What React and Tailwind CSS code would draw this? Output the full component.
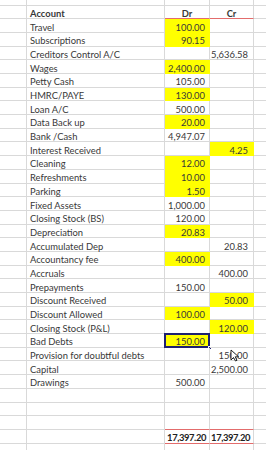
import React from 'react';

const rows = [
  ['Travel', '100.00', '', 'dr'],
  ['Subscriptions', '90.15', '', 'dr'],
  ['Creditors Control A/C', '', '5,636.58', ''],
  ['Wages', '2,400.00', '', 'dr'],
  ['Petty Cash', '105.00', '', ''],
  ['HMRC/PAYE', '130.00', '', 'dr'],
  ['Loan A/C', '500.00', '', ''],
  ['Data Back up', '20.00', '', 'dr'],
  ['Bank /Cash', '4,947.07', '', ''],
  ['Interest Received', '', '4.25', 'cr'],
  ['Cleaning', '12.00', '', 'dr'],
  ['Refreshments', '10.00', '', 'dr'],
  ['Parking', '1.50', '', 'dr'],
  ['Fixed Assets', '1,000.00', '', ''],
  ['Closing Stock (BS)', '120.00', '', ''],
  ['Depreciation', '20.83', '', 'dr'],
  ['Accumulated Dep', '', '20.83', ''],
  ['Accountancy fee', '400.00', '', 'dr'],
  ['Accruals', '', '400.00', ''],
  ['Prepayments', '150.00', '', ''],
  ['Discount Received', '', '50.00', 'cr'],
  ['Discount Allowed', '100.00', '', 'dr'],
  ['Closing Stock (P&L)', '', '120.00', 'cr'],
  ['Bad Debts', '150.00', '', 'sel'],
  ['Provision for doubtful debts', '', '150.00', 'cursor'],
  ['Capital', '', '2,500.00', ''],
  ['Drawings', '500.00', '', ''],
  ['', '', '', ''],
  ['', '', '', ''],
  ['', '', '', 'last'],
];

const Cursor = () => (
  <svg className="absolute left-[20px] top-[1px]" width="10" height="13" viewBox="0 0 10 13">
    <path d="M1 1 L1 11 L3.5 8.5 L5.5 12 L7 11.3 L5.2 7.8 L8.6 7.8 Z" fill="#fff" stroke="#111" strokeWidth="0.9" strokeLinejoin="round" />
  </svg>
);

const Row = ({ account, dr, cr, mark }) => {
  const drYellow = mark === 'dr' || mark === 'sel';
  const crYellow = mark === 'cr';
  const red = mark === 'last';
  return (
    <div className="flex h-[13.7px] shrink-0">
      <div className="w-[27px] border-r border-b border-[#d9d9d9]" />
      <div className="w-[138px] border-r border-b border-[#d9d9d9] pl-[3px] flex items-end whitespace-nowrap">
        {account}
      </div>
      <div
        className={`relative w-[45px] border-r border-b flex items-end justify-end pr-[4px] whitespace-nowrap ${
          drYellow ? 'bg-[#ffff00] border-[#ffff00]' : red ? 'border-r-[#d9d9d9] border-b-[#e36c6c]' : 'border-[#d9d9d9]'
        }`}
      >
        {dr}
        {mark === 'sel' && (
          <>
            <div className="absolute -left-px -top-px -right-px -bottom-px border-2 border-[#1f2170]" />
            <div className="absolute -right-[3px] -bottom-[3px] w-[4px] h-[4px] bg-[#1f2170] border border-white" />
          </>
        )}
      </div>
      <div
        className={`relative w-[44px] border-r border-b flex items-end justify-end pr-[5px] whitespace-nowrap ${
          crYellow ? 'bg-[#ffff00] border-[#ffff00]' : red ? 'border-r-[#d9d9d9] border-b-[#e36c6c]' : 'border-[#d9d9d9]'
        }`}
      >
        {cr}
        {mark === 'cursor' && <Cursor />}
      </div>
      <div className="flex-1 border-b border-[#d9d9d9]" />
    </div>
  );
};

export default function App() {
  return (
    <div
      className="h-[450px] w-[266px] overflow-hidden bg-white flex flex-col text-[9.4px] leading-none text-[#383838]"
      style={{ fontFamily: 'Lato, "Liberation Sans", sans-serif' }}
    >
      {/* row above header, mostly scrolled out */}
      <div className="flex h-[13.7px] shrink-0 -mt-[8.1px]">
        <div className="w-[27px] border-r border-b border-[#d9d9d9]" />
        <div className="w-[138px] border-r border-b border-[#d9d9d9]" />
        <div className="w-[45px] border-r border-b border-[#d9d9d9]" />
        <div className="w-[44px] border-r border-b border-[#d9d9d9]" />
        <div className="flex-1 border-b border-[#d9d9d9] pl-[2px] flex items-end pb-[6px] overflow-hidden whitespace-nowrap">
          Cr
        </div>
      </div>

      {/* header */}
      <div className="flex h-[13.7px] shrink-0 font-bold">
        <div className="w-[27px] border-r border-b border-[#d9d9d9]" />
        <div className="w-[138px] border-r border-b border-[#d9d9d9] pl-[3px] flex items-end">
          Account
        </div>
        <div className="w-[45px] border-r border-b border-r-[#d9d9d9] border-b-[#e36c6c] flex items-end justify-center">
          Dr
        </div>
        <div className="w-[44px] border-r border-b border-r-[#d9d9d9] border-b-[#e36c6c] flex items-end justify-center">
          Cr
        </div>
        <div className="flex-1 border-b border-[#d9d9d9]" />
      </div>

      {rows.map(([account, dr, cr, mark], i) => (
        <Row key={i} account={account} dr={dr} cr={cr} mark={mark} />
      ))}

      {/* totals */}
      <div className="flex h-[13.7px] shrink-0 font-bold text-[#222] tracking-[-0.4px]">
        <div className="w-[27px] border-r border-b border-[#d9d9d9]" />
        <div className="w-[138px] border-r border-b border-[#d9d9d9]" />
        <div className="w-[45px] border-r border-b border-r-[#d9d9d9] border-b-[#e36c6c] flex items-end justify-end pr-[3px] whitespace-nowrap">
          17,397.20
        </div>
        <div className="w-[44px] border-r border-b border-r-[#d9d9d9] border-b-[#e36c6c] flex items-end justify-end pr-[3px] whitespace-nowrap">
          17,397.20
        </div>
        <div className="flex-1 border-b border-[#d9d9d9]" />
      </div>

      <div className="flex h-[13.7px] shrink-0">
        <div className="w-[27px] border-r border-[#d9d9d9]" />
        <div className="w-[138px] border-r border-[#d9d9d9]" />
        <div className="w-[45px] border-r border-[#d9d9d9]" />
        <div className="w-[44px] border-r border-[#d9d9d9]" />
      </div>
    </div>
  );
}
